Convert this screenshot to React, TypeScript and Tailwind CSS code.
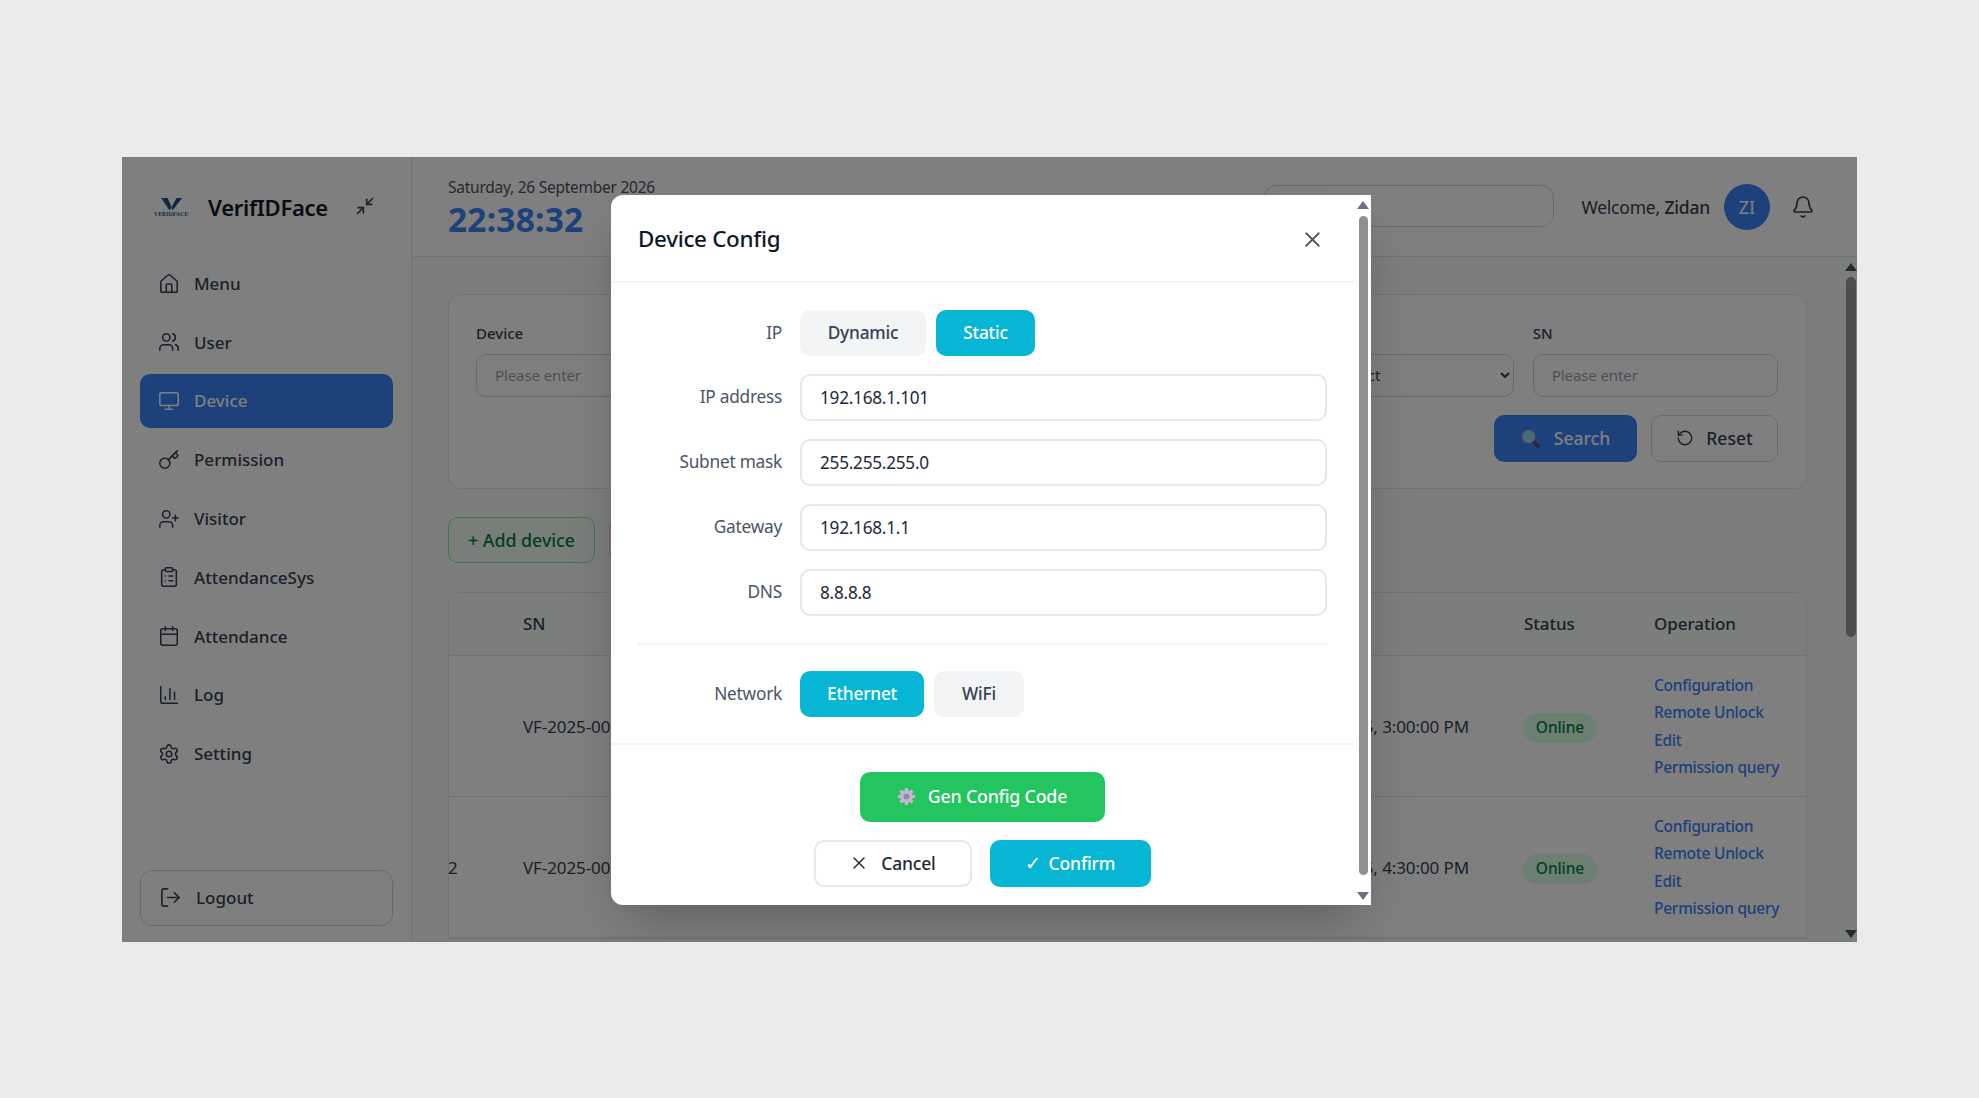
import React from 'react'
import {
  Bell,
  Calendar,
  ChartColumn,
  ClipboardList,
  House,
  Key,
  LogOut,
  Minimize2,
  Monitor,
  RotateCcw,
  Settings,
  UserPlus,
  Users,
  X,
} from 'lucide-react'

const menu = [
  { label: 'Menu', icon: House },
  { label: 'User', icon: Users },
  { label: 'Device', icon: Monitor, active: true },
  { label: 'Permission', icon: Key },
  { label: 'Visitor', icon: UserPlus },
  { label: 'AttendanceSys', icon: ClipboardList },
  { label: 'Attendance', icon: Calendar },
  { label: 'Log', icon: ChartColumn },
  { label: 'Setting', icon: Settings },
]

const rows = [
  { index: '', sn: 'VF-2025-001', time: '1/15/2025, 3:00:00 PM' },
  { index: '2', sn: 'VF-2025-002', time: '1/15/2025, 4:30:00 PM' },
]

const Logo = () => (
  <svg viewBox="0 0 36 20" className="w-[36px] h-[20px] shrink-0">
    <path d="M8 1h5l5 10.5-1.5 2z" fill="#2f5d8a" />
    <path d="M12 1h2.5l4 9-1 1.5z" fill="#1e3a5f" />
    <path d="M29 1h-5.5l-5 9.5 1 3z" fill="#1e4a80" />
    <text x="18" y="18.5" textAnchor="middle" fontSize="5.8" fontWeight="700" fill="#2a5b96" fontFamily="Liberation Serif, serif">VERIDFACE</text>
  </svg>
)

const MagnifierEmoji = () => (
  <svg viewBox="0 0 20 20" className="w-[19px] h-[19px]">
    <path d="M12 12l6 6" stroke="#7a3a66" strokeWidth="3.4" strokeLinecap="round" />
    <circle cx="8" cy="8" r="6.6" fill="#8fd8e6" stroke="#9fb6c4" strokeWidth="1.4" />
  </svg>
)

const GearEmoji = () => (
  <svg viewBox="0 0 20 20" className="w-[19px] h-[19px]">
    <g fill="#c7b3d6">
      <circle cx="10" cy="10" r="6.6" />
      <rect x="8.2" y="1" width="3.6" height="18" rx="1" />
      <rect x="8.2" y="1" width="3.6" height="18" rx="1" transform="rotate(45 10 10)" />
      <rect x="8.2" y="1" width="3.6" height="18" rx="1" transform="rotate(90 10 10)" />
      <rect x="8.2" y="1" width="3.6" height="18" rx="1" transform="rotate(135 10 10)" />
    </g>
    <circle cx="10" cy="10" r="3" fill="#8f8a99" />
  </svg>
)

const Sidebar = () => (
  <aside className="w-[290px] shrink-0 bg-white border-r border-gray-200 flex flex-col px-[18px]">
    <div className="h-[100px] flex items-center pl-[13px]">
      <Logo />
      <span className="ml-[19px] text-[22px] leading-none font-semibold tracking-[-0.3px] text-gray-900">VerifIDFace</span>
      <Minimize2 className="ml-[27px] w-[20px] h-[20px] text-gray-700 -mt-[2px]" strokeWidth={2} />
    </div>
    <nav className="flex flex-col gap-[4.8px]">
      {menu.map(({ label, icon: Icon, active }) => (
        <div
          key={label}
          className={`h-[54px] rounded-[10px] flex items-center gap-[14px] pl-[18px] text-[17px] font-medium ${active ? 'bg-[#3b82f6] text-white' : 'text-gray-700'}`}
        >
          <Icon className="w-[22px] h-[22px]" strokeWidth={1.7} />
          <span>{label}</span>
        </div>
      ))}
    </nav>
    <div className="mt-auto mb-[16px] h-[56px] rounded-[12px] border border-gray-300 flex items-center gap-[14px] pl-[18px] text-[17px] font-medium text-gray-700">
      <LogOut className="w-[23px] h-[23px]" strokeWidth={1.7} />
      <span>Logout</span>
    </div>
  </aside>
)

const Topbar = () => (
  <header className="h-[100px] shrink-0 bg-white border-b border-gray-200 flex items-center pl-[36px] pr-[42px] pt-[2px]">
    <div className="mt-[3px]">
      <div className="text-[15.5px] leading-[20px] mb-[2px] text-gray-600 tracking-[-0.25px]">Saturday, 26 September 2026</div>
      <div className="text-[33.5px] leading-[41px] font-bold text-[#3b82f6] tracking-[0.2px]">22:38:32</div>
    </div>
    <div className="ml-auto -mt-[2px] w-[290px] h-[42px] rounded-[12px] border border-gray-300" />
    <span className="ml-[27px] text-[17.5px] text-gray-700 tracking-[-0.2px]">
      Welcome, <span className="font-medium">Zidan</span>
    </span>
    <div className="ml-[14px] w-[46px] h-[46px] rounded-full bg-[#3b82f6] text-white flex items-center justify-center text-[18px]">ZI</div>
    <Bell className="ml-[21px] w-[24px] h-[24px] text-gray-700" strokeWidth={1.7} />
  </header>
)

const Field = ({ label, children }: { label: string; children: React.ReactNode }) => (
  <div>
    <label className="block text-[15px] leading-[20px] font-medium text-gray-700 mb-[11px]">{label}</label>
    {children}
  </div>
)

const textInput = 'w-full h-[43px] rounded-[10px] border border-gray-300 bg-white pl-[18px] text-[15px] placeholder:text-gray-400 tracking-[-0.1px]'

const Filters = () => (
  <section className="bg-white rounded-[12px] border border-gray-200 h-[195px] pl-[27px] pr-[28px] pt-[28px]">
    <div className="grid grid-cols-5 gap-x-[19px]">
      <Field label="Device"><input className={textInput} placeholder="Please enter" readOnly /></Field>
      <Field label="Name"><input className={textInput} placeholder="Please enter" readOnly /></Field>
      <Field label="Model"><input className={textInput} placeholder="Please enter" readOnly /></Field>
      <Field label="Status">
        <select className={`${textInput} text-gray-700`} defaultValue="">
          <option value="">Please select</option>
        </select>
      </Field>
      <Field label="SN"><input className={textInput} placeholder="Please enter" readOnly /></Field>
    </div>
    <div className="flex justify-end gap-[14px] mt-[18px]">
      <button className="w-[143px] h-[47px] rounded-[10px] bg-[#3b82f6] text-white text-[17.5px] font-medium flex items-center justify-center gap-[14px]">
        <MagnifierEmoji />
        Search
      </button>
      <button className="w-[127px] h-[47px] rounded-[10px] border border-gray-300 bg-white text-gray-700 text-[17.5px] font-medium flex items-center justify-center gap-[12px]">
        <RotateCcw className="w-[18px] h-[18px]" strokeWidth={1.8} />
        Reset
      </button>
    </div>
  </section>
)

const DeviceTable = () => (
  <section className="bg-white rounded-t-[12px] border border-gray-200 text-[17px] text-gray-700">
    <div className="h-[63px] bg-gray-50 border-b border-gray-200 flex items-center font-medium tracking-[-0.05px]">
      <span className="ml-[74px]">SN</span>
      <span className="ml-[auto] w-[130px]">Status</span>
      <span className="w-[152px]">Operation</span>
    </div>
    {rows.map((row) => (
      <div key={row.sn} className="h-[141px] border-b border-gray-200 flex items-center pt-[2px] tracking-[-0.1px]">
        <span className="w-[75px] shrink-0 -ml-px">{row.index}</span>
        <span>{row.sn}</span>
        <span className="ml-auto mr-[54px]">{row.time}</span>
        <div className="w-[131px]">
          <span className="inline-flex w-[74px] h-[30px] mt-[2px] items-center justify-center rounded-full bg-green-100 text-green-700 text-[15.5px] font-medium">Online</span>
        </div>
        <div className="w-[152px] flex flex-col text-[15.5px] leading-[27.3px] text-[#3b82f6] font-medium tracking-[-0.25px]">
          <span>Configuration</span>
          <span>Remote Unlock</span>
          <span>Edit</span>
          <span>Permission query</span>
        </div>
      </div>
    ))}
  </section>
)

const FormRow = ({ label, children }: { label: string; children: React.ReactNode }) => (
  <div className="flex items-center gap-[18px]">
    <label className="w-[145px] text-right text-[17.3px] text-gray-600 tracking-[-0.25px]">{label}</label>
    {children}
  </div>
)

const Choice = ({ on, width, children }: { on?: boolean; width: string; children: React.ReactNode }) => (
  <button className={`${width} h-[46px] rounded-[10px] text-[17.3px] font-medium tracking-[-0.2px] ${on ? 'bg-[#06b6d4] text-white' : 'bg-gray-100 text-gray-700'}`}>
    {children}
  </button>
)

const ConfigInput = ({ value }: { value: string }) => (
  <input
    className="flex-1 h-[47px] rounded-[10px] border-2 border-gray-200 bg-white pl-[18px] text-[17.2px] text-gray-800 tracking-[-0.25px]"
    value={value}
    readOnly
  />
)

const ModalScrollbar = () => (
  <div className="w-[16px] shrink-0 bg-white flex flex-col items-center pt-[6px] pb-[5px]">
    <div className="w-0 h-0 border-x-[6px] border-x-transparent border-b-[8px] border-b-gray-500" />
    <div className="w-[9px] flex-1 mt-[7px] mb-[17px] rounded-full bg-[#8f8f8f]" />
    <div className="w-0 h-0 border-x-[6px] border-x-transparent border-t-[8px] border-t-gray-500" />
  </div>
)

const ConfigModal = () => (
  <div className="absolute inset-0 bg-black/50 flex items-center justify-center pl-[3px] pt-[1px]">
    <div className="w-[760px] h-[710px] bg-white rounded-l-[12px] shadow-2xl flex">
      <div className="flex-1 min-w-0 flex flex-col">
        <div className="h-[88px] shrink-0 border-b-2 border-gray-100 flex items-center justify-between pl-[27px] pr-[30px] pt-[3px]">
          <h2 className="text-[22.4px] font-medium text-gray-900 tracking-[-0.3px]">Device Config</h2>
          <X className="w-[25px] h-[25px] text-gray-600" strokeWidth={1.7} />
        </div>
        <div className="pl-[26px] pr-[28px] pt-[27px] flex flex-col gap-[18px]">
          <FormRow label="IP">
            <div className="flex gap-[10px]">
              <Choice width="w-[126px]">Dynamic</Choice>
              <Choice width="w-[99px]" on>Static</Choice>
            </div>
          </FormRow>
          <FormRow label="IP address"><ConfigInput value="192.168.1.101" /></FormRow>
          <FormRow label="Subnet mask"><ConfigInput value="255.255.255.0" /></FormRow>
          <FormRow label="Gateway"><ConfigInput value="192.168.1.1" /></FormRow>
          <FormRow label="DNS"><ConfigInput value="8.8.8.8" /></FormRow>
          <div className="border-t-2 border-gray-100 mt-[9px] mb-[8px] ml-px" />
          <FormRow label="Network">
            <div className="flex gap-[10px]">
              <Choice width="w-[124px]" on>Ethernet</Choice>
              <Choice width="w-[90px]">WiFi</Choice>
            </div>
          </FormRow>
        </div>
        <div className="mt-[26px] border-t-2 border-gray-100 pt-[27px] pr-[2px] flex flex-col items-center">
          <button className="w-[245px] h-[50px] rounded-[10px] bg-[#22c55e] text-white text-[17.8px] font-medium tracking-[-0.2px] flex items-center justify-center gap-[12px]">
            <GearEmoji />
            Gen Config Code
          </button>
          <div className="flex gap-[18px] mt-[18px]">
            <button className="w-[158px] h-[47px] rounded-[10px] border-2 border-gray-200 bg-white text-gray-800 text-[17.5px] font-medium tracking-[-0.2px] flex items-center justify-center gap-[12px]">
              <X className="w-[20px] h-[20px]" strokeWidth={1.7} />
              Cancel
            </button>
            <button className="w-[161px] h-[47px] rounded-[10px] bg-[#06b6d4] text-white text-[17.6px] font-medium tracking-[-0.2px] flex items-center justify-center gap-[8px]">
              <span className="text-[19px] font-normal">✓</span>
              Confirm
            </button>
          </div>
        </div>
      </div>
      <ModalScrollbar />
    </div>
  </div>
)

export default function App() {
  return (
    <div className="h-screen bg-[#ebebeb] flex items-center justify-center font-['Noto_Sans',sans-serif]">
      <div className="relative w-[1735px] h-[785px] overflow-hidden flex bg-white">
        <Sidebar />
        <main className="flex-1 min-w-0 flex flex-col bg-gray-50">
          <Topbar />
          <div className="relative flex-1 overflow-hidden pl-[36px] pr-[50px] pt-[37px]">
            <Filters />
            <div className="flex gap-[14px] mt-[28px] mb-[29px]">
              <button className="w-[147px] h-[46px] pt-[2px] rounded-[10px] border border-green-300 bg-green-50 text-green-700 text-[17.8px] font-medium">+ Add device</button>
              <button className="w-[147px] h-[46px] rounded-[10px] border border-red-200 bg-red-50 text-red-600 text-[17.8px] font-medium">Delete</button>
            </div>
            <DeviceTable />
            {/* page scrollbar */}
            <div className="absolute right-0 top-0 bottom-0 w-[12px] flex flex-col items-center pt-[6px] pb-[4px]">
              <div className="w-0 h-0 border-x-[6px] border-x-transparent border-b-[8px] border-b-gray-600" />
              <div className="w-[10px] h-[360px] mt-[6px] rounded-full bg-[#9a9a9a]" />
              <div className="mt-auto w-0 h-0 border-x-[6px] border-x-transparent border-t-[8px] border-t-gray-600" />
            </div>
          </div>
        </main>
        <ConfigModal />
      </div>
    </div>
  )
}
